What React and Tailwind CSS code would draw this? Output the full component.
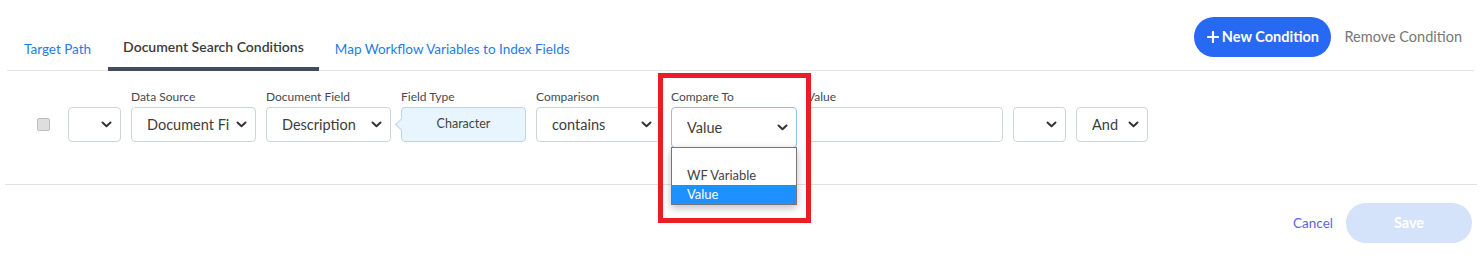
import React from 'react';

const FONT = { fontFamily: 'Lato, "Open Sans", sans-serif' };

function Chevron() {
  return (
    <svg width="11" height="7" viewBox="0 0 11 7" className="shrink-0">
      <path d="M1.5 1.5 L5.5 5.2 L9.5 1.5" fill="none" stroke="#333" strokeWidth="2" strokeLinecap="round" strokeLinejoin="round" />
    </svg>
  );
}

function Select({ label, value, width, focused = false }) {
  return (
    <div className="flex flex-col" style={{ width }}>
      <div className="h-[20px] text-[12px] leading-[20px] text-[#444a52] whitespace-nowrap">{label}</div>
      <div
        className={
          focused
            ? 'h-[41px] flex items-center justify-between pl-[15px] pr-[8px] rounded-[4px] border border-[#8cc0f5] bg-white'
            : 'h-[35px] flex items-center justify-between pl-[15px] pr-[8px] rounded-[4px] border border-[#cfd4da] bg-white'
        }
      >
        <span className="text-[14.5px] text-[#3d3d3d] whitespace-nowrap overflow-hidden">{value}</span>
        <Chevron />
      </div>
    </div>
  );
}

export default function App() {
  return (
    <div className="w-[1481px] h-[260px] bg-white relative overflow-hidden" style={FONT}>
      {/* Header */}
      <div className="mx-[7px] flex justify-between border-b border-[#e3e5e8] h-[71px]">
        <div className="flex self-end">
          <div className="px-[17px] pt-[2px] pb-[11px] text-[13.5px] leading-[20px] text-[#1f7be6]">Target Path</div>
          <div className="px-[15px] pb-[9px] text-[14px] leading-[20px] font-semibold text-[#3b3b3b] border-b-4 border-[#414d5f] -mb-px">
            Document Search Conditions
          </div>
          <div className="px-[16px] pt-[2px] pb-[11px] text-[13.5px] leading-[20px] text-[#1f7be6]">Map Workflow Variables to Index Fields</div>
        </div>
        <div className="flex items-start pt-[17px] pr-[12px] gap-[13px]">
          <button className="h-[40px] w-[137px] rounded-full bg-[#2769f2] text-white text-[14.5px] font-bold flex items-center justify-center gap-[3px]">
            <svg width="12" height="12" viewBox="0 0 12 12">
              <path d="M6 1 V11 M1 6 H11" stroke="white" strokeWidth="2.2" strokeLinecap="round" />
            </svg>
            New Condition
          </button>
          <div className="h-[40px] flex items-center text-[14.5px] text-[#777]">Remove Condition</div>
        </div>
      </div>

      {/* Condition row */}
      <div className="flex items-start pl-[37px] pt-[16px] h-[113px]">
        <div className="mt-[31px] w-[13px] h-[13px] rounded-[2px] bg-[#dedede] border border-[#bdbdbd]" />
        <div className="ml-[18px] flex items-start gap-[10px]">
          <Select label="" value="" width={53} />
          <Select label="Data Source" value="Document Fi" width={125} />
          <Select label="Document Field" value="Description" width={125} />
          <div className="flex flex-col w-[125px]">
            <div className="h-[20px] text-[12px] leading-[20px] text-[#444a52]">Field Type</div>
            <div className="h-[35px] relative rounded-[4px] border border-[#bcd5e8] bg-[#e9f5fe] flex items-center justify-center">
              <div className="absolute left-[-5px] top-[12px] w-[9px] h-[9px] rotate-45 bg-[#e9f5fe] border-l border-b border-[#bcd5e8]" />
              <span className="text-[12.5px] text-[#444]">Character</span>
            </div>
          </div>
          <Select label="Comparison" value="contains" width={125} />
          <div className="relative">
            <Select label="Compare To" value="Value" width={126} focused />
            <div className="absolute left-0 top-[60px] w-[126px] bg-white border border-[#767676] shadow-[0_3px_8px_rgba(0,0,0,0.25)] text-[13px]">
              <div className="h-[18px]" />
              <div className="h-[19px] leading-[19px] pl-[15px] text-[#444]">WF Variable</div>
              <div className="h-[19px] leading-[19px] pl-[15px] bg-[#1e90ff] text-white">Value</div>
            </div>
            <div className="absolute left-[-13px] top-[-14px] w-[153px] h-[150px] border-[5px] border-[#ec1c24]" />
          </div>
          <div className="flex flex-col w-[196px]">
            <div className="h-[20px] text-[12px] leading-[20px] text-[#444a52]">Value</div>
            <div className="h-[35px] rounded-[4px] border border-[#cfd4da] bg-white" />
          </div>
          <Select label="" value="" width={53} />
          <Select label="" value="And" width={72} />
        </div>
      </div>

      {/* Footer */}
      <div className="mx-[5px] w-[1472px] pr-[5px] border-t border-[#dde2ea] flex justify-end items-center pt-[18px] gap-[13px]">
        <div className="text-[13.5px] text-[#5b64e8]">Cancel</div>
        <button className="h-[40px] w-[126px] rounded-full bg-[#d4e2fa] text-white text-[14.5px] font-bold">Save</button>
      </div>
    </div>
  );
}
